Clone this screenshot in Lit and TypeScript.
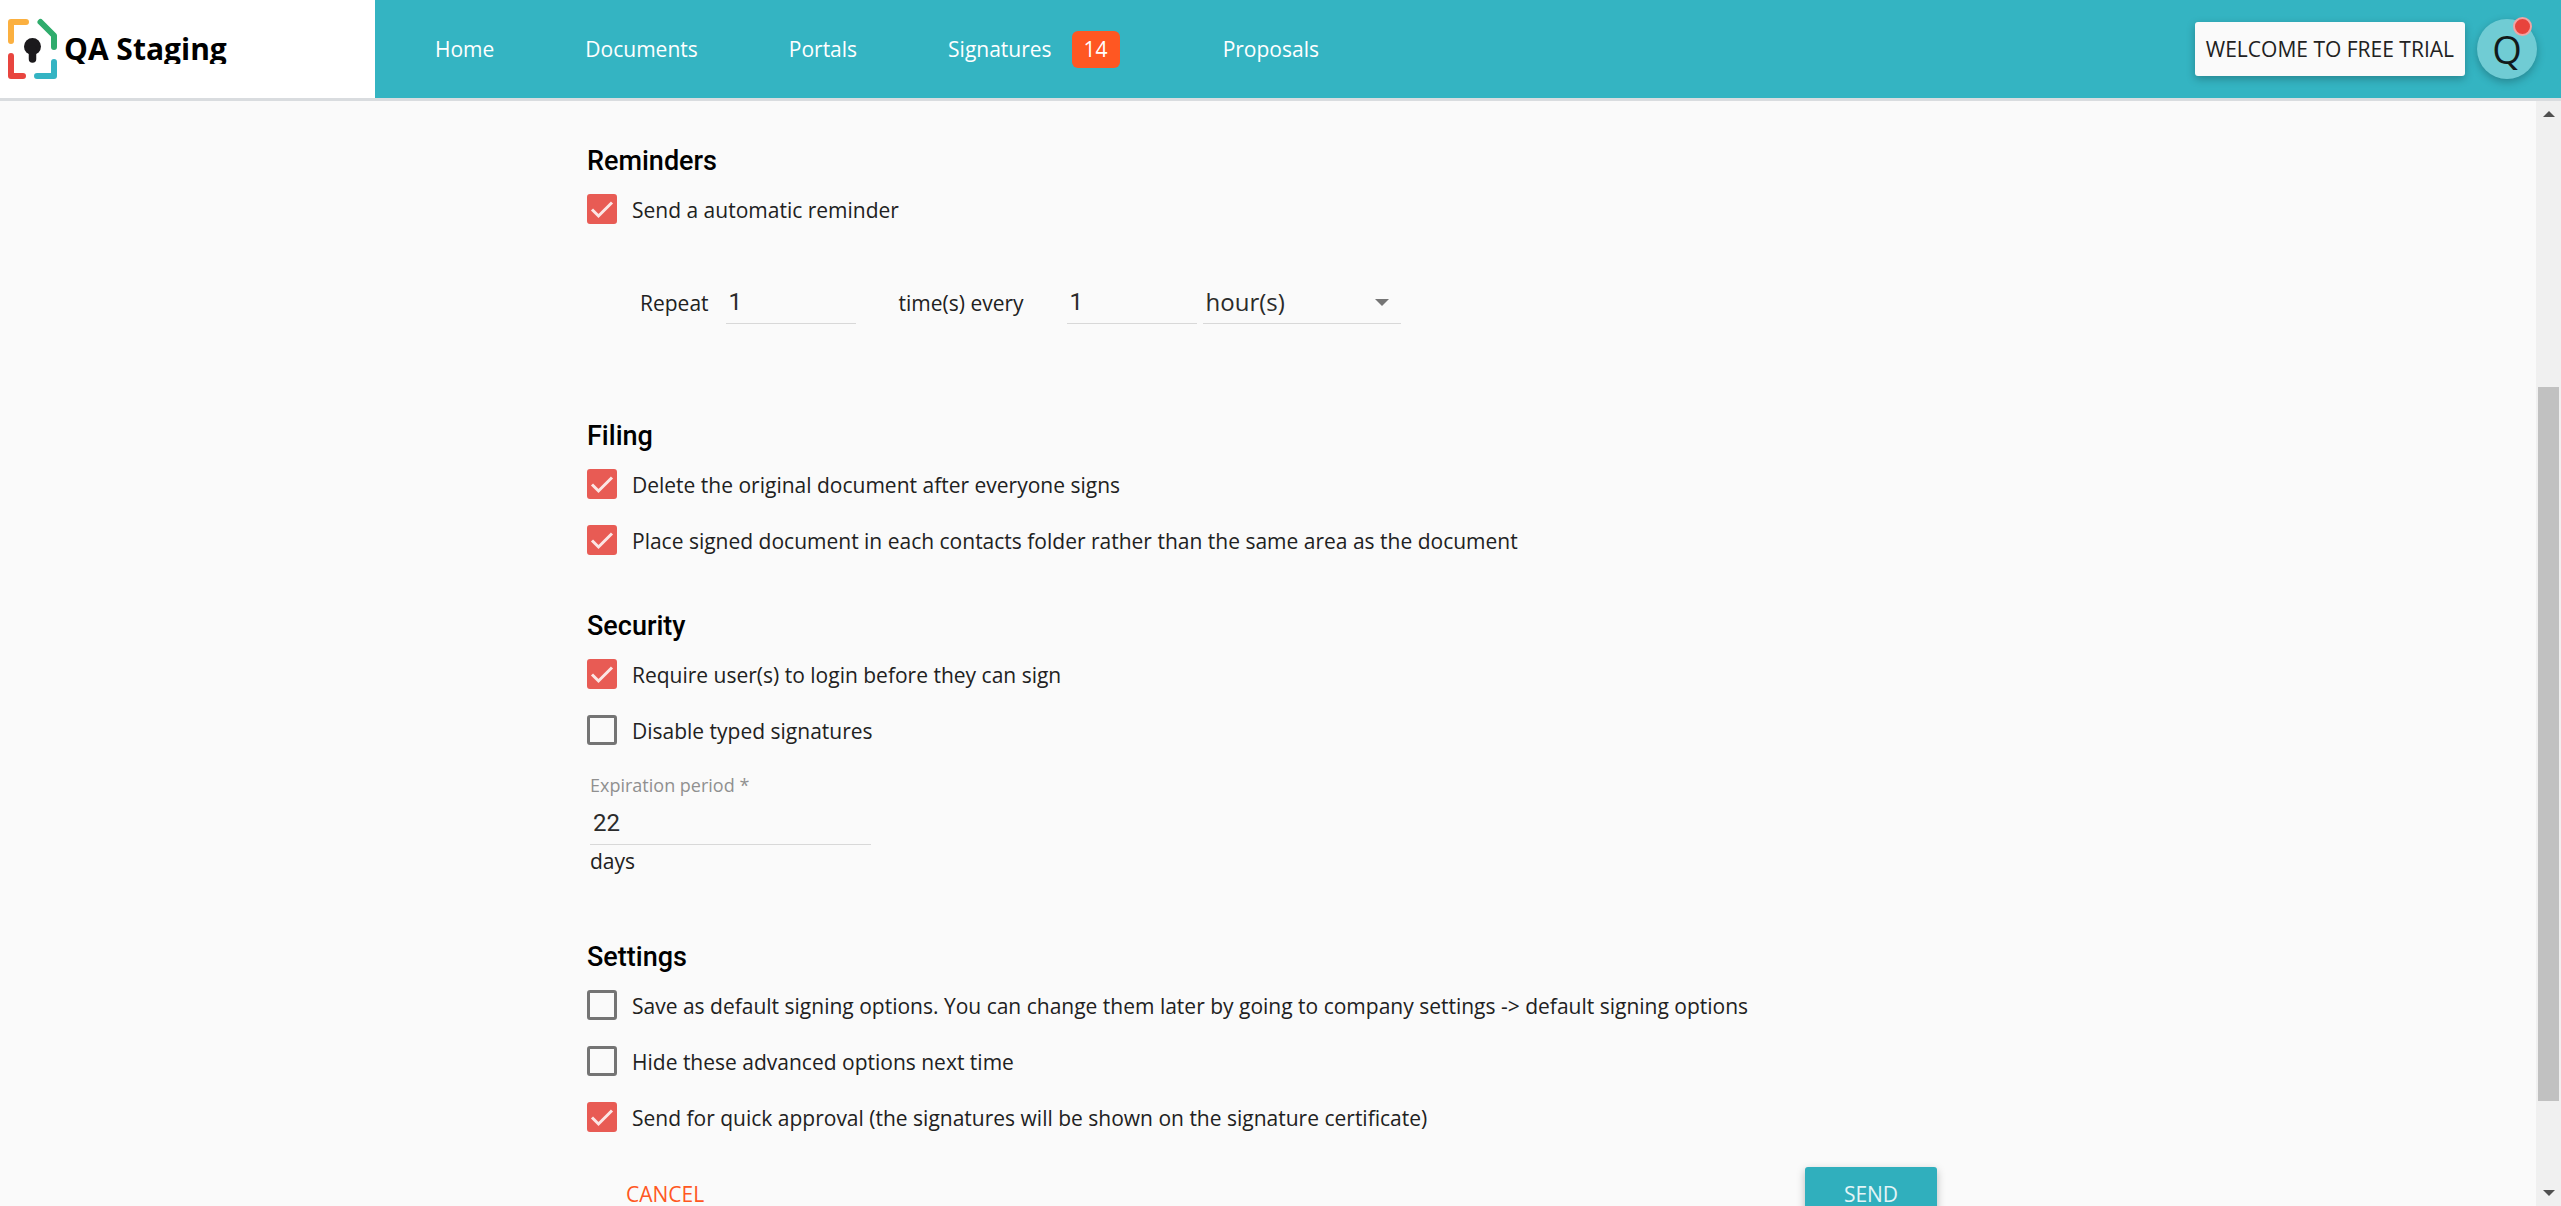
import { LitElement, html, css, svg } from "lit";
import { customElement, property } from "lit/decorators.js";

@customElement("option-check")
class OptionCheck extends LitElement {
  @property({ type: Boolean }) checked = false;
  @property() label = "";

  static styles = css`
    :host {
      display: block;
    }
    .row {
      display: flex;
      align-items: center;
      gap: 15px;
      cursor: pointer;
    }
    .box {
      display: grid;
      flex: none;
      width: 30px;
      height: 30px;
    }
    .input,
    .mark {
      grid-area: 1 / 1;
      box-sizing: border-box;
      width: 100%;
      height: 100%;
      margin: 0;
    }
    .input {
      appearance: none;
      border: 3px solid #747474;
      border-radius: 3px;
      cursor: pointer;
    }
    .input:checked {
      border-color: #e85b54;
      background: #e85b54;
    }
    .mark {
      visibility: hidden;
      pointer-events: none;
    }
    .input:checked + .mark {
      visibility: visible;
    }
    .label {
      padding-top: 2px;
      line-height: 28px;
    }
  `;

  private toggle(event: Event) {
    this.checked = (event.target as HTMLInputElement).checked;
  }

  render() {
    return html`
      <label class="row">
        <span class="box">
          <input class="input" type="checkbox" .checked=${this.checked} @change=${this.toggle} />
          <svg class="mark" viewBox="0 0 30 30" aria-hidden="true">
            <path d="M5 15.5 L11.5 22 L25 8.5" fill="none" stroke="#fbe6e5" stroke-width="3" />
          </svg>
        </span>
        <span class="label">${this.label}</span>
      </label>
    `;
  }
}

const logo = svg`
  <g fill="none" stroke-width="6" stroke-linecap="round" stroke-linejoin="round">
    <path d="M3 22V3H18" stroke="#fbb040" />
    <path d="M32.500 3 L46 16.500 V28" stroke="#2fac6c" />
    <path d="M3 37V57H15" stroke="#e8453f" />
    <path d="M46 43V57H29" stroke="#34b4c3" />
  </g>
  <circle cx="24.500" cy="27.500" r="8.500" fill="#1b191c" />
  <path d="M24.500 30V40" fill="none" stroke="#1b191c" stroke-width="7.500" stroke-linecap="round" />
`;

@customElement("app-root")
class AppRoot extends LitElement {
  static styles = css`
    :host {
      display: flex;
      flex-direction: column;
      height: 100vh;
      overflow: hidden;
      background: #fafafa;
      color: #212121;
      font: 21px/28px "Open Sans", sans-serif;
    }
    .header {
      display: flex;
      flex: none;
      align-items: center;
      height: 98px;
      border-bottom: 3px solid #d9dcdf;
      background: #34b4c2;
    }
    .brand {
      display: flex;
      align-items: center;
      align-self: stretch;
      box-sizing: border-box;
      width: 375px;
      padding-left: 8px;
      gap: 7px;
      background: #fff;
      color: #000;
      text-decoration: none;
    }
    .logo {
      width: 49px;
      height: 60px;
      overflow: visible;
    }
    .brand-name {
      height: 30px;
      overflow: hidden;
      font-size: 30px;
      font-weight: 700;
      line-height: 30px;
    }
    .nav {
      display: flex;
      flex: 1;
      align-items: center;
      gap: 91px;
      padding-left: 60px;
    }
    .nav-link {
      display: flex;
      align-items: center;
      color: #fff;
      text-decoration: none;
    }
    .badge {
      margin: 0 12px 0 20px;
      padding: 0 12px;
      border-radius: 6px;
      background: #ff5722;
      line-height: 37px;
    }
    .account {
      display: flex;
      align-items: center;
      gap: 12px;
      padding-right: 24px;
    }
    .button {
      height: 54px;
      border: 0;
      border-radius: 3px;
      background: none;
      font: inherit;
      text-transform: uppercase;
      cursor: pointer;
    }
    .trial {
      padding: 0 11px;
      background: #fafafa;
      box-shadow: 0 3px 8px rgba(0, 0, 0, 0.26);
      color: #212121;
    }
    .avatar {
      position: relative;
      width: 60px;
      height: 60px;
      padding: 0;
      border: 0;
      border-radius: 50%;
      background: #70ccd4;
      box-shadow: 0 3px 8px rgba(0, 0, 0, 0.26);
      color: #121a1b;
      font: 38px/60px "Open Sans", sans-serif;
      cursor: pointer;
    }
    .dot {
      position: absolute;
      top: -2px;
      right: 5px;
      box-sizing: border-box;
      width: 19px;
      height: 19px;
      border: 2px solid #f3a3a3;
      border-radius: 50%;
      background: #e8433c;
    }
    .body {
      display: flex;
      flex: 1;
      min-height: 0;
    }
    .main {
      flex: 1;
      min-width: 0;
      overflow: hidden;
    }
    .form {
      display: flex;
      flex-direction: column;
      max-width: 1362px;
      margin: 0 auto;
      padding-top: 44px;
    }
    .section {
      display: flex;
      flex-direction: column;
      gap: 26px;
      margin-bottom: 55px;
    }
    .title {
      margin: 0 0 -9px;
      color: #000;
      font: 500 27px/32px Roboto, sans-serif;
    }
    .repeat {
      display: flex;
      align-items: flex-end;
      margin: 31px 0 41px 53px;
    }
    .caption {
      padding-bottom: 7px;
    }
    .field {
      box-sizing: border-box;
      height: 43px;
      margin: 0;
      padding: 0 3px;
      border: 0;
      border-bottom: 1px solid #d8d8d8;
      border-radius: 0;
      outline: 0;
      background: none;
      color: #2b2b2b;
      font: 24px/28px Roboto, sans-serif;
    }
    .count {
      width: 130px;
      margin-left: 17px;
    }
    .every {
      margin-left: 43px;
    }
    .interval {
      margin: 0 6px 0 43px;
    }
    .picker {
      display: grid;
      align-items: center;
      width: 198px;
    }
    .unit {
      grid-area: 1 / 1;
      width: 100%;
      appearance: none;
      font-family: "Open Sans", sans-serif;
    }
    .caret {
      grid-area: 1 / 1;
      justify-self: end;
      width: 14px;
      height: 7px;
      margin-right: 12px;
      fill: #757575;
      pointer-events: none;
    }
    .expiry {
      display: flex;
      flex-direction: column;
      width: 281px;
      margin: -2px 0 9px 3px;
    }
    .expiry-label {
      padding-bottom: 1px;
      color: #909090;
      font-size: 18px;
      line-height: 32px;
    }
    .suffix {
      line-height: 32px;
    }
    .actions {
      display: flex;
      justify-content: space-between;
      margin-top: -20px;
      padding: 0 12px;
    }
    .cancel {
      padding: 0 27px;
      color: #ff5722;
    }
    .send {
      min-width: 132px;
      background: #30afbd;
      box-shadow: 0 3px 8px rgba(0, 0, 0, 0.26);
      color: #e3f5f7;
    }
    .scroll {
      display: flex;
      flex: none;
      flex-direction: column;
      align-items: center;
      justify-content: space-between;
      box-sizing: border-box;
      width: 25px;
      padding: 10px 0;
      background: #f0f0f0;
    }
    .arrow {
      width: 12px;
      height: 6px;
      fill: #505050;
    }
    .track {
      display: flex;
      flex: 1;
      flex-direction: column;
      width: 21px;
      margin: 9px 0;
    }
    .before {
      flex: 261;
    }
    .thumb {
      flex: 714;
      background: #c1c1c1;
    }
    .after {
      flex: 80;
    }
  `;

  render() {
    return html`
      <header class="header">
        <a class="brand" href="#">
          <svg class="logo" viewBox="0 0 49 60" aria-hidden="true">${logo}</svg>
          <span class="brand-name">QA Staging</span>
        </a>
        <nav class="nav">
          <a class="nav-link" href="#home">Home</a>
          <a class="nav-link" href="#documents">Documents</a>
          <a class="nav-link" href="#portals">Portals</a>
          <a class="nav-link" href="#signatures">Signatures<span class="badge">14</span></a>
          <a class="nav-link" href="#proposals">Proposals</a>
        </nav>
        <div class="account">
          <button class="button trial" type="button">Welcome to free trial</button>
          <button class="avatar" type="button">Q<span class="dot"></span></button>
        </div>
      </header>
      <div class="body">
        <main class="main">
          <form class="form">
            <section class="section">
              <h2 class="title">Reminders</h2>
              <option-check checked label="Send a automatic reminder"></option-check>
              <div class="repeat">
                <label class="caption" for="times">Repeat</label>
                <input class="field count" id="times" type="text" inputmode="numeric" value="1" />
                <label class="caption every" for="interval">time(s) every</label>
                <input class="field count interval" id="interval" type="text" inputmode="numeric" value="1" />
                <div class="picker">
                  <select class="field unit" aria-label="Interval unit">
                    <option>hour(s)</option>
                  </select>
                  <svg class="caret" viewBox="0 0 14 7" aria-hidden="true"><path d="M0 0H14L7 7Z" /></svg>
                </div>
              </div>
            </section>
            <section class="section">
              <h2 class="title">Filing</h2>
              <option-check checked label="Delete the original document after everyone signs"></option-check>
              <option-check
                checked
                label="Place signed document in each contacts folder rather than the same area as the document"
              ></option-check>
            </section>
            <section class="section">
              <h2 class="title">Security</h2>
              <option-check checked label="Require user(s) to login before they can sign"></option-check>
              <option-check label="Disable typed signatures"></option-check>
              <div class="expiry">
                <label class="expiry-label" for="expiry">Expiration period *</label>
                <input class="field" id="expiry" type="text" inputmode="numeric" value="22" required />
                <span class="suffix">days</span>
              </div>
            </section>
            <section class="section">
              <h2 class="title">Settings</h2>
              <option-check
                label="Save as default signing options. You can change them later by going to company settings -> default signing options"
              ></option-check>
              <option-check label="Hide these advanced options next time"></option-check>
              <option-check
                checked
                label="Send for quick approval (the signatures will be shown on the signature certificate)"
              ></option-check>
            </section>
            <div class="actions">
              <button class="button cancel" type="button">Cancel</button>
              <button class="button send" type="button">Send</button>
            </div>
          </form>
        </main>
        <div class="scroll" aria-hidden="true">
          <svg class="arrow" viewBox="0 0 12 6"><path d="M0 6H12L6 0Z" /></svg>
          <div class="track">
            <div class="before"></div>
            <div class="thumb"></div>
            <div class="after"></div>
          </div>
          <svg class="arrow" viewBox="0 0 12 6"><path d="M0 0H12L6 6Z" /></svg>
        </div>
      </div>
    `;
  }
}
